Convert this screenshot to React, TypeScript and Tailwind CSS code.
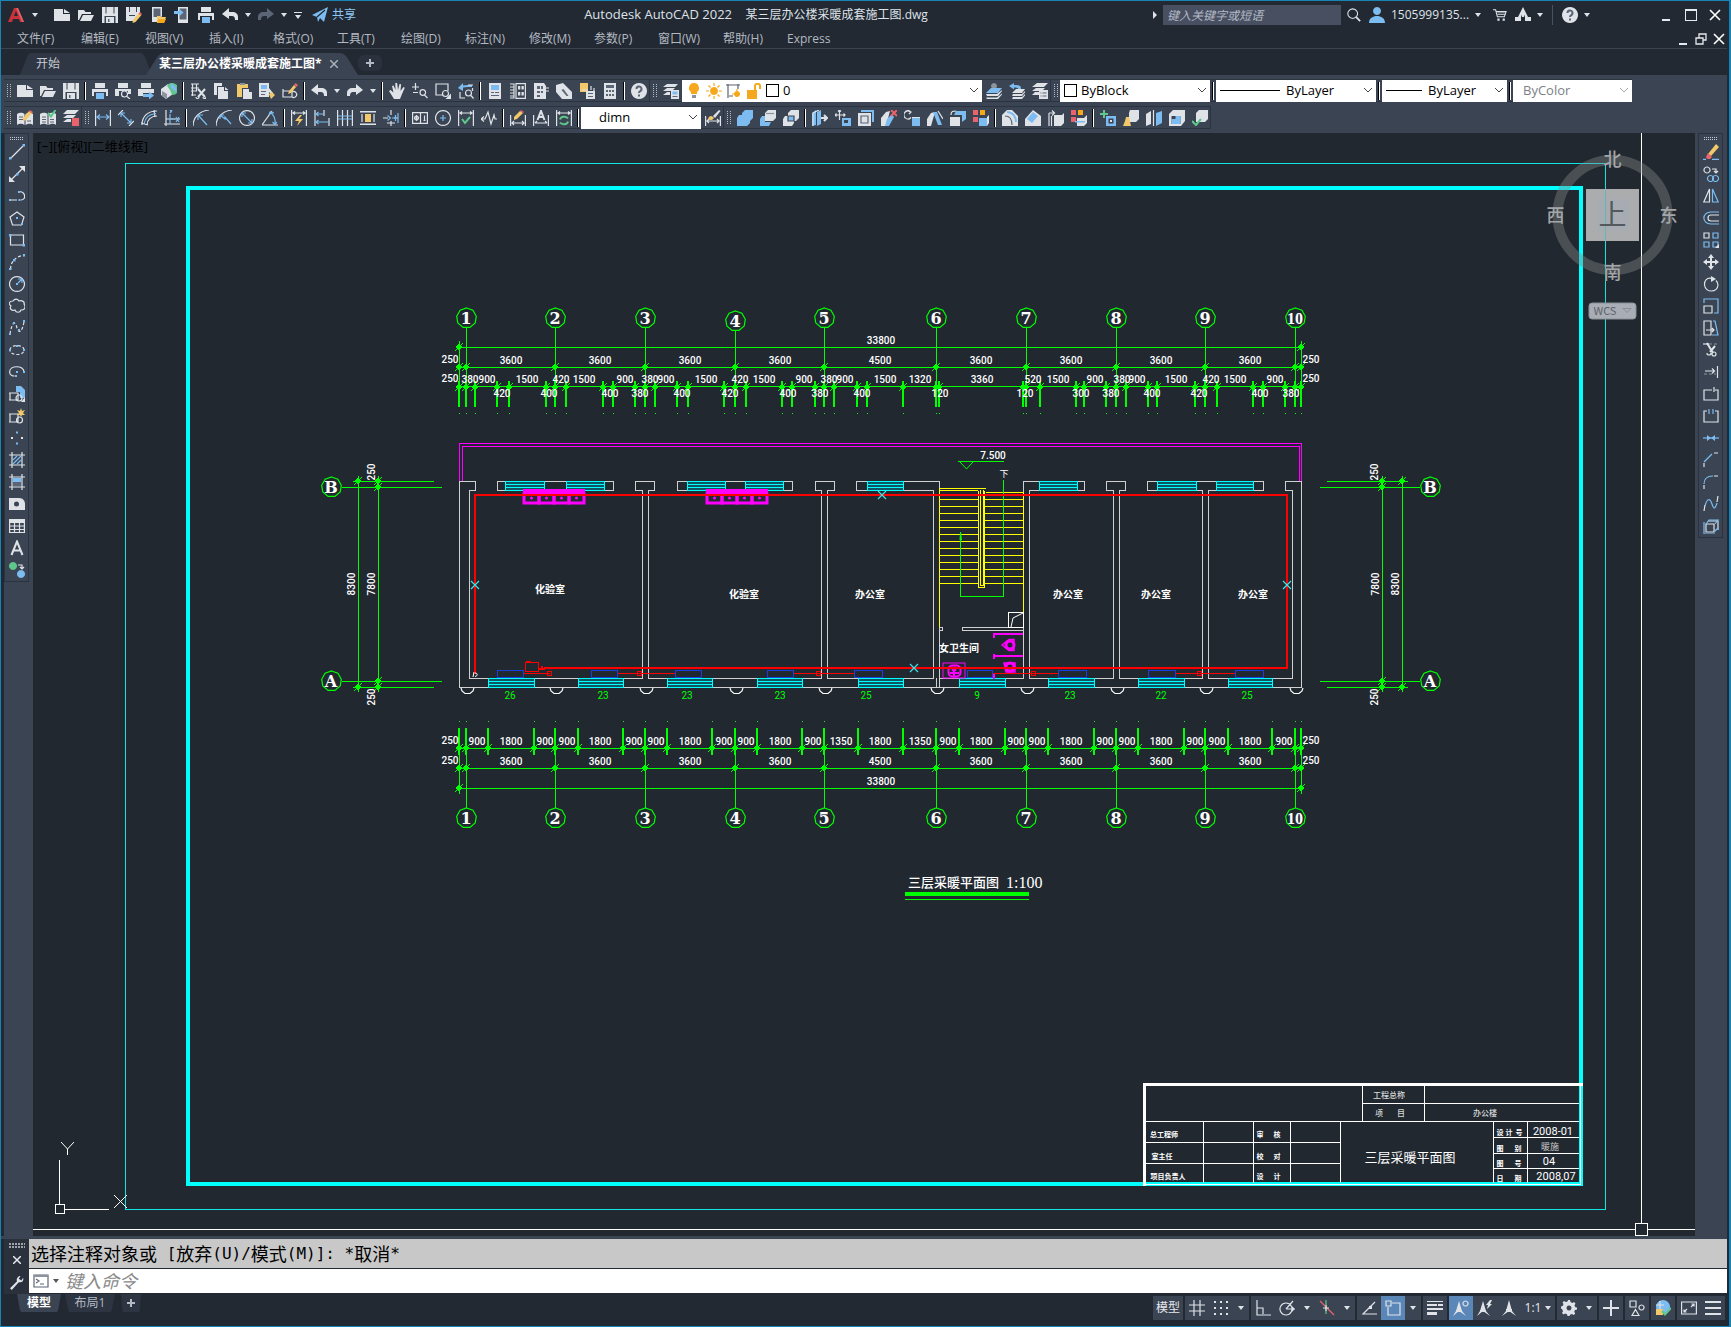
import React from "react";

/* ------------------------------------------------------------------ */
/* Icons: each icon is a list of "<mode><colour>:<path>" parts.         */
/* mode f = fill, s = stroke, t = thick stroke, d = dashed stroke       */
/* ------------------------------------------------------------------ */
const COLORS: Record<string, string> = {
  W: "#dfe3e8",
  B: "#7cbcf0",
  Y: "#f2c96a",
  O: "#f5a81c",
  G: "#5fc78b",
  R: "#e8636b",
  D: "#3b4453",
  K: "#5b6575",
  N: "#20262e",
  X: "#8c939d",
};

const ICONS: Record<string, string> = {
  newFile: "fW:M0 2h9v5h7v7H0z;fW:M10 2l6 4h-6z",
  open: "fW:M0 3h6l1.500 2H13v2H4l-3 6H0z;fW:M5 8h11l-3 6H2z",
  save: "fW:M0 0h16v16H0z;fD:M3.500 0h1v6.500h-1zM11.500 0h1v6.500h-1zM2.500 9h11v7h-11z;fW:M4 10h8v6H4z;fK:M6 12h1.500v3H6z",
  saveAs: "fW:M0 0h14v7l-6 7H0z;fD:M3 0h1v5H3zM10 0h1v5h-1zM3 8h6v1H3z;fY:M7 13l6-7 2.500 2-6 7-3 1z;fR:M12.500 6.500l1.500-1.500 2 2-1.500 1.500z",
  webOpen: "fW:M2 0h10v9l-3 6H2z;fK:M3.500 1.500h7V10h-7z;fY:M7 9h3l1 1h5l-2 6H7z;fO:M8.500 12H16l-2 4H7z",
  webSave: "fW:M4 0h10v16H4z;fK:M5.500 1.500h7v11h-7z;fB:M0 4h5V1.500l4.500 4L5 9.500V7H0z",
  print: "fW:M3 0h10v5H3zM0 6h16v7h-2V9H2v4H0z;fB:M4 10h8v6H4z",
  preview: "fW:M3 0h10v5H3zM0 6h16v5h-3V8H4v5H0z;sW:M6.500 11a3 3 0 1 0 6 0a3 3 0 1 0-6 0M12 13.500l3 2.500",
  publish: "fW:M3 0h10v5H3zM0 6h16v4H5v3H0z;fB:M5 11h6V8.500l5 4-5 4V14H5z",
  globe: "fW:M0 6l7-5 5 3v7l-7 5-5-4z;fG:M6 3a6 6 0 1 1 5 9l-2-5z;fB:M9 1a6 6 0 0 1 6 8l-5-4z;fX:M1 8l5 3v5l-5-3z",
  cut: "sW:M1 1h8M1 5h8M1 8h6M1 12h5M2.500 1v12M6.500 1v7;tW:M8 6l7 8M15 6l-7 8;sW:M6 14a1.500 1.500 0 1 0 3 0M13 14a1.500 1.500 0 1 0 3 0",
  copy: "fW:M1 0h8v3H4v9H1z;fW:M5 4h6v4h4v8H5z;fW:M12 4l3.500 3H12z",
  paste: "fY:M1 1h11v4H6v9H1z;fX:M4 0h5v2H4z;fW:M7 6h6v3h3v7H7z",
  matchProps: "fW:M0 0h10v14H0z;fB:M2 2h6v4H2z;fK:M2 8h5v1H2zM2 11h4v1H2z;fW:M8 7l2-2 4 5-2 1z;fY:M10 11l3-2 3 3-4 4z",
  blockEdit: "sW:M1 8h9v6H1zM1 6v2M10 14a3 3 0 1 0 0-5;fY:M7 8l5-6 2 2-5 6-3 1z;fR:M12 2l1.500-2 2.500 2-1.500 2z",
  undo: "fW:M0 7l7-6v4h3c4 0 6 2 6 5v3h-3c0-3-1-4-3-4H7v3z",
  redo: "fW:M16 7L9 1v4H6c-4 0-6 2-6 5v3h3c0-3 1-4 3-4h3v3z",
  redoDim: "fK:M16 7L9 1v4H6c-4 0-6 2-6 5v3h3c0-3 1-4 3-4h3v3z",
  pan: "fW:M5 16L0 8l1.500-1L4.500 9.500 3 3l1.500-.5L6.500 7 6.300 0h1.800L9 7l1.500-6 1.600.3L11.500 8 14.500 4l1.300.8L13 11l-2 5z",
  zoomRt: "sW:M0 4h7M3.500 0v7M1 9.500h5;sW:M8 9.500a2.800 2.800 0 1 0 5.600 0a2.800 2.800 0 1 0-5.600 0M12.500 12l3 3",
  zoomWin: "sW:M8 12H1V1h12v7;sW:M7.500 10.500a3 3 0 1 0 6 0a3 3 0 1 0-6 0;fW:M16 10.500v5.500h-5.500z",
  zoomPrev: "tB:M2 5c3-3 7-2 12-2;fB:M0 5l5-5v8z;sW:M2 9v6h5M14.500 5v3M10 2h5;sW:M7.500 10a3 3 0 1 0 6 0a3 3 0 1 0-6 0M12.500 12l3 3.500",
  props: "fW:M2 0h12v16H2z;fB:M4 2h8v5H4z;fK:M4 9h3v1H4zM8 9h4v1H8zM4 12h8v1H4z",
  designCenter: "sW:M0 1h4v14H0M0 4h4M0 7h4M0 10h4M0 13h4M6 .600h9.400v14.800H6z;fW:M8 3h2.300v3.500H8zM11.500 3h2.300v3.500h-2.300zM8 9h2.300v3.500H8zM11.500 9h2.300v3.500h-2.300z",
  toolPal: "fW:M1 0h10l2 3v13H1z;fK:M4 3h3v3H4zM8 3h2v3H8zM4 8h3v2H4zM8 8h2v2H8zM4 12h3v2H4z;sW:M13 5h3M13 8h3",
  sheetSet: "fW:M0 2l7-2 9 9v7H6L0 9z;fK:M5.500 7l2-1 5 7h-2z",
  markup: "fY:M1 0h8v9H1z;sW:M3 7h6M12 3v4M15 5v3;fW:M7 8h9v8H7z;fK:M9 10h5v1H9zM9 13h5v1H9z",
  calc: "fW:M2 0h12v16H2z;fK:M4 2h8v3H4zM4 7h2v2H4zM7 7h2v2H7zM10 7h2v2h-2zM4 11h2v2H4zM7 11h2v2H7zM10 11h2v2h-2z",
  help: "fW:M8 0a8 8 0 1 0 .01 0z;tK:M5.500 6a2.500 2.500 0 1 1 3.500 2.300c-1 .5-1 1-1 1.700;fK:M7 11.500h2v2H7z",
  layerProps: "fW:M4 1h11l-3 3H0zM4 5h8l-3 3H0zM4 9h3v3H0z;fW:M8 7h8v9H8z;fB:M9.500 8.500h5v3h-5z;fK:M9.500 13h5v1h-5z",
  layerCurrent: "fX:M8 0a3 3 0 1 0 .01 0z;fB:M5 5h11l-4 5H0z;fW:M0 11h11l5-4v1l-4 5H1zM0 14.500h11l5-4v1L12 16H1z",
  layerPrev: "fB:M0 3l5-3v2c6 0 7 1 7 4H9c0-1.500-2-1.500-4-1.500v2z;fW:M7 6h9l-3 4H3zM4 11h9l3-3v1.500l-3 3.500H3zM4 14h9l3-3v1.500l-3 3.500H3z",
  layerState: "fW:M5 0h11l-4 4H0zM4 5h9l-3 3H0zM3 9h4v3H0z;fW:M7 7h9v9H7z;fK:M8.500 9.500h1v1h-1zM10.500 9.500h4v1h-4zM8.500 12.500h1v1h-1zM10.500 12.500h4v1h-4z",
  refEdit: "fW:M0 4c3-2 6-1 7.500 0v11c-2-1-4-2-7.500 0zM8.500 4c2-1 5-2 7.500 0v11c-3-2-5-1-7.500 0z;sK:M2 7h4M2 9.500h4M10 11h4;fY:M6 8l6-7 3 2-6 7-3 1z;fR:M12 1.500L13 0l3 2-1 1.500z",
  refSave: "fW:M0 4c3-2 6-1 7.500 0v11c-2-1-4-2-7.500 0zM8.500 4c2-1 5-2 7.500 0v11c-3-2-5-1-7.500 0z;sK:M2 7h4M2 9.500h4M2 12h4M10 9.500h4M10 12h4;tG:M8 3l3 3.500L15.500 0",
  refRemove: "fW:M4 0h12l-4 4H0zM4 5h9l-3 3H0zM4 9h4v3H0z;fR:M9 8h7v8H9z",
  dimLinear: "sW:M.6 0v16M15.400 0v16;sB:M2 7h12M5 4.500L2 7l3 2.500M11 4.500L14 7l-3 2.500",
  dimAligned: "sW:M0 5l5-5M11 16l5-5;sB:M3 3l10 10M3 3v4M3 3h4M13 13v-4M13 13H9",
  dimArc: "sW:M1 15C1 6 7 1 16 1M6 15c0-5 4-9 10-9M0 13l7 2M13 0l1 7;sB:M3 14C4 8 8 4 15 3.500",
  dimOrd: "sW:M2 0v16M0 14h16M2 9h14;sB:M6 4v10M6 9h5M12 7l3 5M15 7l-3 5M6 0l2 2M8 0L6 3",
  dimRadius: "sW:M16 0C7 1 0 7 0 16;sB:M5 5l9 10M5 5v5M5 5h5",
  dimJog: "sW:M16 0C7 1 0 7 0 16;sB:M4 5l5 4V7l6 7M4 5h4M4 5v4",
  dimDia: "sW:M8 .6a7.400 7.400 0 1 0 .01 0z;sB:M3 3l10 10M3 7V3h4M9 13h4V9",
  dimAngle: "sW:M0 15h16M0 15L10 1;sB:M8 2c4 3 6 7 5 13M7 5l1-3 4 1M10.500 12l2.500 2.500 2-2.500",
  dimQuick: "sW:M.6 0v16M15.400 0v16M2 3h12M4 1.500L2 3l2 1.500M12 1.500L14 3l-2 1.500;fY:M9 5l-5 6h4l-2 5 6-7H8l3-4z",
  dimBase: "sW:M1 0v16M10 0v6M15 8v8;sB:M2 4h8M2 12h13M4.500 2L2 4l2.500 2M4.500 10L2 12l2.500 2",
  dimCont: "sW:M.6 0v16M5.500 0v16M10.500 0v16M15.400 0v16;sB:M1 6h14M1 9h14",
  dimSpace: "fW:M0 1h16v1.500H0zM0 13.500h16V15H0z;fY:M5 4h6v8H5z;sW:M2 4v8M14 4v8",
  dimBreak: "sW:M0 8h5M11 8h4M8 0v5M8 11v5M4 13h8;sB:M4.500 5.500l3 2.500-3 2.500M12.500 5v6M15 3v10M9 8h3",
  tolerance: "sW:M.6 2.600h14.800v10.800H.6zM8.500 2.600v10.800M4.500 5v6M2 8h5M12.500 5.500v5M11.500 10.500h2M4.500 6a2 2 0 1 0 .01 0z",
  center: "sW:M8 .6a7.400 7.400 0 1 0 .01 0z;sB:M8 5v6M5 8h6",
  inspect: "sW:M.6 0v16M15.400 0v16M2 3h12M4 1.500L2 3l2 1.500M12 1.500L14 3l-2 1.500;tG:M4 9l3 4 5-6",
  jogLine: "sW:M0 9h4l3-7 3 12 3-9 1 4h2M0 9l3-2.500M0 9l3 2.500",
  dimEdit: "sW:M.6 5v11M15.400 5v11M2 13h12M4 11l-2 2 2 2M12 11l2 2-2 2;fY:M4 7l6-6 3 2-6 6-3 1z;fR:M10 1l1-1 3 2-1 1z",
  dimText: "sW:M.6 5v11M15.400 5v11M2 13h12M4 11l-2 2M12 11l2 2;tW:M4.500 10L8 1l3.500 9M6 7h4",
  dimUpdate: "sW:M.6 0v16M15.400 0v16M2 3h12M4 1.500L2 3l2 1.500M12 1.500L14 3l-2 1.500;tG:M4 9.500c1-3.500 6-3.500 8-1M12 11.500c-1 3.500-6 3.500-8 1",
  dimStyle: "sW:M.6 6v10M15.400 6v10M2 11h12M4 9l-2 2 2 2M12 9l2 2-2 2;fY:M3 9c1-3 3-4 5-2l1 1c-1 2-4 3-6 1z;fW:M8 6l6-6 1.500 1L10 8z",
  union: "fB:M8 0h8v8l-3 3v2l-3 3H0V8l2-3h3V3z",
  subtract: "fW:M8 0h8v8l-3 3H5V3z;fB:M0 9l2-3h3v6h6l-2 4H0z;sX:M6 3.500h8",
  intersect: "fW:M8 0h8v8l-3 3H5V3z;fW:M0 9l2-3h4v4h5v3l-2 3H0z;fB:M5 6h6v5H5z;sD:M5 6h6v5H5z",
  extrude: "fB:M0 3l4-3v15l-4 1zM5 2l4-2v14l-4 2z;sW:M1 16V3l6-3;tW:M9 8h5M12 5l3 3-3 3",
  moveFace: "sW:M4.500 0v10M0 5h10M3 1.500L4.500 0 6 1.500M1.500 3.500L0 5l1.500 1.500M8.500 3.500L10 5 8.500 6.500;fB:M7 8h9v8H7z;fD:M9 10h4v3H9z",
  offsetFace: "fB:M3 0h13v12h-2V2H3z;fW:M0 3h13v13H0z;sK:M3 6h7v7H3z",
  deleteFace: "fW:M0 8l5-6 4-1-4 15H0z;fB:M6 9l5-5 2 3-5 9H4z;tR:M10 0l6 6M16 0l-6 6",
  rotateFace: "sW:M6 1.500a4 4 0 1 0 1 6M4 0l3 2-2 2;fB:M8 7h8v9H8z;fW:M8 7h8v1H8z",
  taperFace: "fW:M0 9l4-6 4-1-4 14H0z;fB:M6 2h4l5 13h-4z;sW:M11 1l5 8",
  copyFace: "fW:M0 7h10v9H0z;fB:M6 1h10v8l-4 3V5H4z;sW:M1 5c0-4 2-4 5-4",
  colorFace: "fR:M0 0h5v5H0zM0 7h5v5H0z;fO:M7 0h5v5H7z;fB:M6 8h8v8H6z;fW:M14 7l2-2v8l-2 3z",
  copyEdge: "fW:M0 5l5-5h5l6 6v10H0z;tB:M5 2c6 0 9 5 9 10;sK:M3 6c5 0 7 4 7 9",
  colorEdge: "fW:M0 9l8-9 8 6v10H0z;fB:M2 9l6-7 5 4-6 7z",
  imprint: "sW:M1 3v13M1 3h5M4 .500L6.500 3 4 5.500M3.500 16V6;fW:M6 5h8l2-2v10l-3 3H6z",
  imprint2: "fR:M0 0h5v5H0zM0 7h5v5H0z;fO:M7 0h5v5H7z;fW:M6 8h7l3-3v8l-3 3H6z;fB:M4 11h10v1.500H4z",
  clean: "tG:M4 0v8M0 4h8;fB:M6 6h10v10H6z;fD:M8.500 8.500h5v5h-5z;fW:M10 10h2v2h-2z",
  separate: "fW:M7 0h9v9l-3 3H6V3z;fY:M3 7h3l2 9H0l2-5z",
  shell: "fW:M0 4l5-3v13l-5 2z;fB:M10 3l6-2v12l-6 3z;sW:M7.500 0v16",
  check: "fW:M0 4l4-4h12v11l-4 5H0z;fD:M2.500 6h9v8h-9z;fB:M2.500 9h4V6h5v8h-9z",
  solidCheck: "fW:M4 3l3-3h9v9l-3 3H4z;tG:M0 11l4 4L9 9",
  line: "sW:M2 14L14 2;fB:M0 13h2.500v2.500H0zM13.500 0H16v2.500h-2.500z",
  xline: "sW:M2 14L14 2;fW:M0 16v-6l6 6zM16 0v6l-6-6z;fB:M7 7h2.500v2.500H7z",
  pline: "sW:M2 12h6M10 4c6-2 8 8 2 8;fB:M0 11h2v2H0zM9 3h2v2H9zM9.500 11h2v2h-2z",
  polygon: "sW:M8 2l7 5-2.500 8h-9L1 7z;fB:M7 7h2v2H7zM12 13h2v2h-2z",
  rect: "sW:M1.500 3h13v10h-13z;fB:M0 2h2.500v2.500H0zM13.500 12H16v2.500h-2.500z",
  arc: "dW:M1.500 15C2 7 7 2 15 1.500;fB:M0 14h2.500v2H0zM4 5h2.500v2.500H4zM14 0h2v2.500h-2z",
  circle: "sW:M8 .6a7.400 7.400 0 1 0 .01 0z;sB:M9 7l4-4M9 3h4v4;fB:M7 7h2v2H7z",
  cloud: "sW:M4 3c2-3 5-2 6 0 3-1 6 1 5 3 2 3 1 6-3 6-1 3-5 3-6 0-3 1-6-1-4-4-3-2-2-5 2-5z",
  spline: "dW:M1 14C3 2 6 0 8 8c2 6 5 4 7-6;fB:M0 13h2v2H0zM4 2h2v2H4zM9 9h2v2H9zM14 0h2v2h-2z",
  ellipse: "dW:M1 8c0-6 14-6 14 0s-14 6-14 0z;fB:M0 7h2v2H0zM14 7h2v2h-2zM7 3h2v2H7z",
  ellipseArc: "sW:M15 8C15 1 .6 1 .6 8c0 3 3 4 5 4;fB:M14 7h2v2h-2zM7 7h2v2H7zM6 11h2v2H6z",
  insert: "sW:M1 7h8v7H1zM0 14h2M0 7h2;fB:M7 0h5l4 4v8H11V6H7z;sW:M7 12a3 3 0 1 0 6 0a3 3 0 1 0-6 0;fW:M16 11v5h-4z",
  block: "sW:M1 6h8v8H1zM0 14h2M0 6h2M7.500 12a3 3 0 1 0 6 0a3 3 0 1 0-6 0;fY:M12 0l1 3 3-1-2 3 2 2-3 0-1 2-1-2-3 0 2-2-2-3 3 1z",
  point: "fB:M7 1.500h2v2H7zM7 12.500h2v2H7z;fW:M2 7h2v2H2zM12 7h2v2h-2z",
  hatch: "sW:M3 0v16M13 0v16M0 3h16M0 13h16;sB:M4 8l4-4M4 12l8-8M8 12l4-4",
  gradient: "sW:M3 0v16M13 0v16M0 3h16M0 13h16;fB:M4 4h8v4H4z;fK:M4 8h8v4H4z",
  region: "fW:M0 2h10c4 0 6 3 6 6v6H0z;fD:M5 8a2.500 2.500 0 1 0 5 0a2.500 2.500 0 1 0-5 0z",
  table: "fW:M0 1h16v4H0z;sW:M.6 2h14.800v12.500H.6zM0 8h16M0 11.500h16M5.500 5v10M10.500 5v10",
  mtext: "tW:M2.500 15L8 1.500 13.500 15M4.500 10.500h7",
  addSel: "fG:M4 0a4 4 0 1 0 .01 0z;fB:M12 8a4 4 0 1 0 .01 0z;sW:M9 3h4v4M11 5l2 2 2-2",
  erase: "fY:M5 10L13 0l3 3-8 9z;fR:M5 9l4 4-2 2H4l-1-2z;sB:M0 15.400h3M9 15.400h7",
  copyObj: "sW:M4 1a3 3 0 1 0 .01 0zM9 3h4v4M11 5l2 2 2-2;sB:M7.500 9.500a3 3 0 1 0 .01 0zM12.500 9.500a3 3 0 1 0 .01 0z",
  mirror: "sW:M6.500 1v13H.8z;sB:M9.500 1v13h5.700z",
  offset: "sW:M16 5H8c-4 0-4 6 0 6h8;sB:M16 2H8C-1.500 2-1.500 14 8 14h8",
  array: "sW:M1 1h5v5H1z;sB:M10 1h5v5h-5zM1 10h5v5H1zM10 10h5v5h-5z;fW:M16 12v4h-4z",
  move: "tW:M8 2v12M2 8h12;fW:M8 0l3 4H5zM8 16l3-4H5zM0 8l4-3v6zM16 8l-4-3v6z",
  rotate: "sW:M9 2.500C4 1 1 5 1.500 9c1 8 13 8 13.500 0 0-2-.5-3-2-4.500;fW:M8 0l5 3-5 3z",
  scale: "sW:M1 8h8v7H1z;sB:M1 5V1h14v14h-4",
  stretch: "sW:M1 1h7v14H1zM3 10h8M9 8l2 2-2 2;sB:M10 1h2l3 14h-6",
  trim: "sW:M0 2h6;dX:M6 2h10;tW:M4 1l6 10M12 4l-5 6;sW:M9 12a2 2 0 1 0 4 0a2 2 0 1 0-4 0M4 11a2 2 0 1 0 4 0",
  extend: "sW:M14.500 2v12M2 7h9M9 4.500L11.500 7 9 9.500;dX:M1 10h12",
  breakPt: "sW:M9 4H1v10h14V4h-3M11 1v5",
  breakAt: "sW:M4 3H1v11h14V3h-3;sB:M6 1v5M10 1v5",
  join: "sB:M0 8h16;fB:M4 5l4 3-4 3zM12 5L8 8l4 3z",
  chamfer: "sW:M1 15v-4M11 1h4;sB:M1 10l8-8",
  fillet: "sW:M1 15v-4M11 2h4;sB:M1 10c0-5 3-8 9-8",
  blend: "sW:M15 0l-1 6M1 15l1-6;sB:M2 10c2-8 5-8 7-2s3 5 5-1",
  explode: "sW:M3 6h8v8H3zM5 3h10v9;sB:M1 4v12h11M3 6l3-4h9l-3 4M11 14l4-4",
  cart: "sW:M0 2h3l2 8h8l2-6H4;fW:M5 5h9v1H5zM5 7h9v1H5zM5 12h2.500v2.500H5zM11 12h2.500v2.500H11z",
  appStore: "fW:M8 0l5 10h-3L8 5l-2 5H3z;fW:M0 10h6v4H0zM10 10h6v4h-6zM7 5h2v5H7z",
  plane: "fB:M0 8L16 0 12 15 8 11l-2 4-1-5z;sN:M5 10l8-7",
  user: "fB:M8 0a4 4 0 1 0 .01 0zM0 16c0-5 4-7 8-7s8 2 8 7z",
  search: "sW:M6.500 1a5.500 5.500 0 1 0 .01 0z;tW:M10.500 10.500L15 15",
  bulb: "fO:M8 0a5 5 0 0 0-3 9v2h6V9a5 5 0 0 0-3-9z;fX:M6 12h4v3H6z",
  sun: "fO:M8 4a4 4 0 1 0 .01 0z;sO:M8 0v3M8 13v3M0 8h3M13 8h3M2.500 2.500l2 2M11.500 11.500l2 2M2.500 13.500l2-2M11.500 4.500l2-2",
  vpFreeze: "sK:M2 13V3M0 2h14M3 13h4M12 1v5M2 1v14;fO:M11 8a3 3 0 1 0 .01 0z;dO:M11 6v10M6 11h10",
  unlock: "fO:M1 7h10v9H1z;tO:M9 7V3c0-3 5-3 5 0v3",
  stGrid: "sW:M5 0v16M11 0v16M0 5h16M0 11h16",
  stSnap: "fW:M1 1h2v2H1zM7 1h2v2H7zM13 1h2v2h-2zM1 7h2v2H1zM7 7h2v2H7zM13 7h2v2h-2zM1 13h2v2H1zM7 13h2v2H7zM13 13h2v2h-2z",
  stOrtho: "sW:M2 0v15h14M2 8h6v6",
  stPolar: "sW:M7 3a6 6 0 1 0 .01 0zM7 9l7-8M7 9h9M12 6l3 3-3 3",
  stIso: "sG:M7 0v14;sR:M1 1l14 14;sW:M4 8h6M7 5v6",
  stTrack: "sW:M14 2L2 14h14;fW:M8 6h3v3H8z",
  stOsnap: "sW:M7 3h8v12H3V7M1 1h5v5H1z",
  stLw: "fW:M0 1h16v1H0zM0 4h10v2H0zM11 4h5v2h-5zM0 8h16v2H0zM0 12h10v3H0z",
  stAnno1: "fW:M6 1l3 10 4 5-7-5-6 5 3-5z;fW:M3 10h6v2H3z;sW:M12.500 1a2.500 2.500 0 1 0 .01 0z",
  stAnno2: "fW:M6 1l3 10 4 5-7-5-6 5 3-5z;fW:M3 10h6v2H3z;fW:M13 0L9 5h2l-1 4 5-5h-2l2-4z",
  stAnno3: "fW:M8 0l3 11 4 5-7-5-7 5 4-5z;fW:M5 9h6v3H5z",
  gear: "fW:M7 0h2l.5 2 2 1L13 2l1.500 1.500-1 1.700.8 2L16 7.500v2l-2 .5-.8 1.800 1 1.700-1.500 1.500-1.700-1-2 .8L8.500 16h-2L6 14.300l-2-.8-1.500 1L1 13l1-1.700-.8-2L0 8.500v-2l1.700-.5.8-2-1-1.500L3 1l1.700 1 1.800-.5z;fD:M8 5.500a2.500 2.500 0 1 0 .01 0z",
  plus: "tW:M8 0v16M0 8h16",
  shapes: "sW:M1 1h6v6H1zM12.500 5a2.500 2.500 0 1 0 .01 0zM6.500 9.500l3.500 6H3z",
  perf: "fB:M8 0a7 7 0 1 0 .01 0z;fY:M1 9h7v6H1z;sW:M1 5h8M5 1v8;tG:M7 11l3 3.500L16 8",
  clean2: "sW:M.6 2h14.800v12H.6zM3 12l3-3M3 9.500V12h2.500M13 4l-3 3M10.500 4H13v2.500",
  menu: "fW:M0 1h16v2H0zM0 7h16v2H0zM0 13h16v2H0z",
  cmd: "sK:M1 2h14v12H1zM3 6l3 2-3 2M7 11h4;fX:M1 2h14v2H1z",
  wrench: "fW:M0 14l8-8c-1-3 1-6 4-6l-2 3 3 2 2-3c1 4-2 6-5 5l-8 9z",
};

function Icon({ name, className = "size-4" }: { name: string; className?: string }) {
  return (
    <svg viewBox="0 0 16 16" className={className} aria-hidden="true" fill="none">
      {ICONS[name].split(";").map((part, i) => {
        const mode = part[0];
        const color = COLORS[part[1]];
        const d = part.slice(3);
        return mode === "f" ? (
          <path key={i} d={d} fill={color} fillRule="evenodd" />
        ) : (
          <path
            key={i}
            d={d}
            stroke={color}
            strokeWidth={mode === "t" ? 2 : 1.2}
            strokeDasharray={mode === "d" ? "3 2" : undefined}
          />
        );
      })}
    </svg>
  );
}

function Caret({ className = "text-[#dfe3e8]" }: { className?: string }) {
  return (
    <svg viewBox="0 0 6 4" className={`h-1 w-1.5 ${className}`} fill="currentColor" aria-hidden="true">
      <path d="M0 0h6L3 4z" />
    </svg>
  );
}

const CaretButton = ({ label, w = "w-3" }: { label: string; w?: string }) => (
  <button type="button" aria-label={label} className={`flex h-full shrink-0 items-center justify-center ${w}`}>
    <Caret />
  </button>
);

/* ------------------------------------------------------------------ */
/* Top chrome                                                          */
/* ------------------------------------------------------------------ */
const QAT: [string, string][] = [
  ["newFile", "新建"],
  ["open", "打开"],
  ["save", "保存"],
  ["saveAs", "另存为"],
  ["webOpen", "从 Web 打开"],
  ["webSave", "保存到 Web"],
  ["print", "打印"],
  ["undo", "放弃"],
];

function TitleBar() {
  return (
    <header className="flex h-7 items-center text-xs text-[#dfe3e8]">
      <div className="flex w-[358px] shrink-0 items-center">
        <button type="button" aria-label="应用程序菜单" className="ml-[7px] flex shrink-0 items-center gap-2">
          <svg viewBox="0 0 16 16" className="size-4" aria-hidden="true">
            <path d="M0 15L6 1h4l6 14h-4l-1-3H5l-1 3zM6 9h4L8 4z" fill="#c8323a" fillRule="evenodd" />
            <path d="M8 1h2l6 14h-2z" fill="#e0606a" />
          </svg>
          <Caret />
        </button>
        <div className="ml-3 flex shrink-0 items-center">
          {QAT.map(([icon, label]) => (
            <button key={icon} type="button" aria-label={label} className="flex w-6 justify-center">
              <Icon name={icon} />
            </button>
          ))}
          <CaretButton label="放弃列表" />
          <button type="button" aria-label="重做" className="flex w-6 justify-center">
            <Icon name="redoDim" />
          </button>
          <CaretButton label="重做列表" />
          <button type="button" aria-label="自定义快速访问工具栏" className="flex w-4 flex-col items-center gap-0.5">
            <span className="h-px w-2 bg-[#dfe3e8]" />
            <Caret />
          </button>
          <button type="button" className="ml-1.5 flex items-center gap-1 whitespace-nowrap text-[#8cc8f5]">
            <Icon name="plane" />
            共享
          </button>
        </div>
      </div>
      <h1 className="min-w-0 flex-1 truncate text-center text-[13px] whitespace-pre">
        Autodesk AutoCAD 2022{"    "}
        <span className="text-xs">某三层办公楼采暖成套施工图.dwg</span>
      </h1>
      <div className="flex w-[574px] shrink-0 items-center">
        <svg viewBox="0 0 4 8" className="mr-1.5 h-2 w-1" aria-hidden="true">
          <path d="M0 0l4 4-4 4z" fill="#dfe3e8" />
        </svg>
        <input
          aria-label="搜索"
          placeholder="键入关键字或短语"
          className="h-5 w-[178px] bg-[#474f61] px-1 text-xs italic outline-none placeholder:text-[#b4bac5]"
        />
        <button type="button" aria-label="搜索" className="ml-1.5">
          <Icon name="search" className="size-3.5" />
        </button>
        <button type="button" className="ml-2 flex items-center gap-1.5">
          <Icon name="user" className="size-4" />
          <span>1505999135...</span>
          <Caret />
        </button>
        <button type="button" aria-label="购物车" className="ml-3">
          <Icon name="cart" className="size-3.5" />
        </button>
        <button type="button" aria-label="应用商店" className="ml-2 flex items-center gap-1.5">
          <Icon name="appStore" />
          <Caret />
        </button>
        <span className="mx-[9px] h-5 w-px bg-[#4a5262]" />
        <button type="button" aria-label="帮助" className="flex items-center gap-1.5">
          <Icon name="help" />
          <Caret />
        </button>
        <div className="ml-auto flex items-center gap-3 pr-1.5">
          <button type="button" aria-label="最小化" className="flex size-3.5 items-end justify-center pb-px">
            <span className="h-0.5 w-2 bg-[#e6e9ed]" />
          </button>
          <button type="button" aria-label="最大化" className="size-3 border border-t-2 border-[#e6e9ed]" />
          <button type="button" aria-label="关闭">
            <svg viewBox="0 0 12 12" className="size-3" stroke="#fff" strokeWidth="1.6" aria-hidden="true">
              <path d="M1 1l10 10M11 1L1 11" />
            </svg>
          </button>
        </div>
      </div>
    </header>
  );
}

const MENUS = [
  "文件(F)", "编辑(E)", "视图(V)", "插入(I)", "格式(O)", "工具(T)", "绘图(D)",
  "标注(N)", "修改(M)", "参数(P)", "窗口(W)", "帮助(H)", "Express",
];

function MenuBar() {
  return (
    <nav className="flex h-5 items-center gap-[23px] border-b border-[#3b4350] pl-4 text-xs text-[#b4b9c1]">
      {MENUS.map((m) => (
        <button key={m} type="button" className="min-w-[41px] text-left whitespace-nowrap">
          {m}
        </button>
      ))}
      <div className="ml-auto flex items-center gap-1.5 pr-0.5">
        <button type="button" aria-label="最小化图形" className="flex size-3 items-end justify-center">
          <span className="h-0.5 w-2 bg-[#e6e9ed]" />
        </button>
        <button type="button" aria-label="还原图形">
          <svg viewBox="0 0 12 12" className="size-3" fill="none" stroke="#e6e9ed" strokeWidth="1.3" aria-hidden="true">
            <path d="M1 5h7v6H1zM4 5V1h7v6H8" />
          </svg>
        </button>
        <button type="button" aria-label="关闭图形">
          <svg viewBox="0 0 12 12" className="size-3" stroke="#fff" strokeWidth="1.6" aria-hidden="true">
            <path d="M1 1l10 10M11 1L1 11" />
          </svg>
        </button>
      </div>
    </nav>
  );
}

/* Slanted tab outline, drawn behind the tab's label. */
const TabShape = ({ fill, flip = false }: { fill: string; flip?: boolean }) => (
  <svg viewBox="0 0 100 22" preserveAspectRatio="none" className="absolute inset-0 -z-10 size-full" aria-hidden="true">
    <path d={flip ? "M0 0h100l-6 18q-1 4-4 4H10q-3 0-4-4z" : "M0 22l5-17q1.500-5 4-5h82q2.500 0 4 5l5 17z"} fill={fill} />
  </svg>
);

function FileTabs() {
  return (
    <div className="isolate flex h-[26px] items-end pt-0.5 pl-[19px] text-xs">
      <button type="button" className="relative h-[22px] w-[132px] pl-4 text-left text-[#c6cad1]">
        <TabShape fill="#2f3744" />
        开始
      </button>
      <div className="relative -ml-1.5 flex h-[22px] w-[212px] items-center">
        <TabShape fill="#3b4453" />
        <button type="button" className="pl-[13px] font-bold whitespace-nowrap text-white">
          某三层办公楼采暖成套施工图*
        </button>
        <button type="button" aria-label="关闭选项卡" className="ml-2">
          <svg viewBox="0 0 8 8" className="size-2" stroke="#aab0ba" strokeWidth="1.5" aria-hidden="true">
            <path d="M0 0l8 8M8 0L0 8" />
          </svg>
        </button>
      </div>
      <button
        type="button"
        aria-label="新图形"
        className="mb-1 flex h-4 w-6 items-center justify-center rounded-md bg-[#2b323e]"
      >
        <svg viewBox="0 0 8 8" className="size-2" stroke="#b4bac4" strokeWidth="2" aria-hidden="true">
          <path d="M4 0v8M0 4h8" />
        </svg>
      </button>
    </div>
  );
}

/* ------------------------------------------------------------------ */
/* Toolbars                                                            */
/* ------------------------------------------------------------------ */
const Handle = () => (
  <svg viewBox="0 0 9 16" className="h-4 w-[9px] shrink-0" aria-hidden="true">
    <path d="M3.500 1v14M6.500 1v14" stroke="#b9bec6" strokeWidth="1" strokeDasharray="1 1" />
  </svg>
);

const Sep = () => (
  <span className="flex w-1.5 shrink-0 justify-center">
    <span className="h-[18px] w-0.5 border-l border-black bg-white" />
  </span>
);

function Tools({ names }: { names: string }) {
  return (
    <>
      {names.split(" ").map((n, i) =>
        n === "|" ? (
          <Sep key={i} />
        ) : n === "v" ? (
          <CaretButton key={i} label="更多" w="w-[13px]" />
        ) : (
          <button key={i} type="button" aria-label={n} className="flex h-full w-[23px] shrink-0 items-center justify-center">
            <Icon name={n} />
          </button>
        ),
      )}
    </>
  );
}

const Bar = ({ children }: { children: React.ReactNode }) => (
  <div className="flex h-[23px] shrink-0 items-center shadow-[inset_0_1px_0_#2b3240,inset_0_-1px_0_#2b3240,inset_-1px_0_0_#2b3240]">
    {children}
  </div>
);

function Combo({
  label,
  value,
  width,
  lead,
  muted = false,
}: {
  label: string;
  value: string;
  width: string;
  lead?: React.ReactNode;
  muted?: boolean;
}) {
  return (
    <div className={`flex h-[22px] shrink-0 items-center bg-white text-[13px] ${width}`}>
      {lead}
      <select
        aria-label={label}
        className={`h-full min-w-0 flex-1 appearance-none bg-transparent outline-none ${muted ? "text-[#7b7f86]" : "text-black"}`}
      >
        <option>{value}</option>
      </select>
      <svg viewBox="0 0 8 5" className="mr-1 h-[5px] w-2 shrink-0" fill="none" aria-hidden="true">
        <path d="M0 0l4 4 4-4" stroke={muted ? "#aaa" : "#444"} />
      </svg>
    </div>
  );
}

const Swatch = () => <span className="mx-1 size-[13px] shrink-0 border border-black bg-white" />;

function Toolbars() {
  return (
    <div className="flex flex-col gap-1 bg-[#3b4453] py-1 pl-[3px]">
      <div className="flex">
        <Bar>
          <Handle />
          <Tools names="newFile open save | print preview publish globe | cut copy paste matchProps blockEdit | undo v redo v | pan zoomRt zoomWin zoomPrev | props designCenter toolPal sheetSet markup calc | help" />
        </Bar>
        <Bar>
          <Handle />
          <Tools names="layerProps" />
          <Combo
            label="图层"
            value="0"
            width="w-[300px]"
            lead={
              <span className="flex shrink-0 items-center gap-1 pl-1">
                <Icon name="bulb" />
                <Icon name="sun" />
                <Icon name="vpFreeze" />
                <Icon name="unlock" />
                <span className="mr-1 size-[13px] border border-black bg-white" />
              </span>
            }
          />
          <Tools names="layerCurrent layerPrev layerState" />
        </Bar>
        <Bar>
          <Handle />
          <Combo label="颜色" value="ByBlock" width="w-[150px]" lead={<Swatch />} />
          <Sep />
          <Combo
            label="线型"
            value="ByLayer"
            width="w-[160px]"
            lead={<span className="mr-1.5 ml-1 h-px w-[60px] shrink-0 bg-black" />}
          />
          <Sep />
          <Combo
            label="线宽"
            value="ByLayer"
            width="w-[125px]"
            lead={<span className="mr-1.5 ml-1 h-px w-9 shrink-0 bg-black" />}
          />
          <Sep />
          <Combo label="打印样式" value="ByColor" width="w-[119px]" muted lead={<span className="w-2.5" />} />
        </Bar>
      </div>
      <div className="flex">
        <Bar>
          <Handle />
          <Tools names="refEdit refSave refRemove" />
        </Bar>
        <Bar>
          <Handle />
          <Tools names="dimLinear dimAligned dimArc dimOrd | dimRadius dimJog dimDia dimAngle | dimQuick dimBase dimCont dimSpace dimBreak | tolerance center inspect jogLine | dimEdit dimText dimUpdate |" />
          <Combo label="标注样式" value="dimn" width="w-[120px]" lead={<span className="w-[18px]" />} />
          <Tools names="dimStyle" />
        </Bar>
        <Bar>
          <Handle />
          <Tools names="union subtract intersect | extrude moveFace offsetFace deleteFace rotateFace taperFace copyFace colorFace | copyEdge colorEdge imprint imprint2 | clean separate shell check solidCheck" />
        </Bar>
      </div>
    </div>
  );
}

const DRAW = "line xline pline polygon rect arc circle cloud spline ellipse ellipseArc insert block point hatch gradient region table mtext addSel".split(" ");
const MODIFY = "erase copyObj mirror offset array move rotate scale stretch trim extend breakPt breakAt join chamfer fillet blend explode".split(" ");

function SideBar({ names, label }: { names: string[]; label: string }) {
  return (
    <div
      role="toolbar"
      aria-label={label}
      className="flex w-[25px] shrink-0 flex-col items-center self-start border border-[#2b3240] pt-0.5"
    >
      <svg viewBox="0 0 14 5" className="h-[5px] w-3.5" aria-hidden="true">
        <path d="M0 1.500h14M0 3.500h14" stroke="#c3c8cf" strokeDasharray="1 1" />
      </svg>
      {names.map((n) => (
        <button key={n} type="button" aria-label={n} className="flex h-[22px] w-full items-center justify-center">
          <Icon name={n} />
        </button>
      ))}
    </div>
  );
}

/* ------------------------------------------------------------------ */
/* Drawing                                                             */
/* ------------------------------------------------------------------ */
const GREEN = "#00ff00";
const CYAN = "#00ffff";
const WALL = "#d0d0d0";
const MAGENTA = "#ff00ff";
const YELLOW = "#ffff00";
const RED = "#ff0000";

const AXES = [466, 555, 645, 735, 824, 936, 1026, 1116, 1205, 1295];
const LEFT = 459;
const RIGHT = 1301;

const UPPER_TICKS = [
  459, 466, 475, 497, 509, 546, 555, 566, 603, 613, 635, 645, 655, 677, 688, 724, 735, 746, 782, 792, 815, 824, 834,
  857, 867, 903, 936, 939, 1023, 1026, 1040, 1076, 1084, 1106, 1116, 1126, 1148, 1157, 1195, 1205, 1217, 1253, 1263,
  1285, 1295, 1301,
];
const UPPER_TEXT: [number, string][] = [
  [470, "380"], [487, "900"], [527, "1500"], [561, "420"], [584, "1500"], [625, "900"], [650, "380"], [666, "900"],
  [706, "1500"], [740, "420"], [764, "1500"], [804, "900"], [829, "380"], [845, "900"], [885, "1500"], [920, "1320"],
  [982, "3360"], [1033, "520"], [1058, "1500"], [1095, "900"], [1122, "380"], [1137, "900"], [1176, "1500"],
  [1211, "420"], [1235, "1500"], [1275, "900"],
];
const LOWER_TEXT: [number, string][] = [
  [502, "420"], [549, "400"], [610, "400"], [640, "380"], [682, "400"], [730, "420"], [788, "400"], [820, "380"],
  [862, "400"], [940, "120"], [1025, "120"], [1081, "300"], [1111, "380"], [1152, "400"], [1199, "420"],
  [1260, "400"], [1291, "380"],
];
const BOTTOM_WINDOWS: [number, number][] = [
  [488, 534], [578, 623], [667, 712], [757, 802], [858, 903], [959, 1005], [1048, 1094], [1138, 1184], [1228, 1272],
];
const TOP_WINDOWS: [number, number][] = [
  [505, 544], [566, 604], [687, 725], [745, 783], [867, 903], [1039, 1077], [1157, 1196], [1216, 1253],
];
const RADIATORS: [number, number][] = [
  [497, 523], [591, 617], [675, 701], [767, 793], [854, 882], [967, 992], [1058, 1086], [1148, 1175], [1235, 1263],
];
const RAD_LABELS: [number, string][] = [
  [510, "26"], [603, "23"], [687, "23"], [780, "23"], [866, "25"], [977, "9"], [1070, "23"], [1161, "22"], [1247, "25"],
];
const ROOMS: [number, number, string][] = [
  [550, 589, "化验室"], [744, 594, "化验室"], [870, 594, "办公室"], [1068, 594, "办公室"], [1156, 594, "办公室"],
  [1253, 594, "办公室"], [959, 648, "女卫生间"],
];

const dimFont = "[font-family:'Roboto','Liberation_Sans',sans-serif]";
const cjkFont = "[font-family:'Noto_Sans_CJK_SC',sans-serif]";
const serifFont = "[font-family:'Liberation_Serif',serif]";

function Dim({ x, y, t, rotate = false }: { x: number; y: number; t: string; rotate?: boolean }) {
  return (
    <text
      x={x}
      y={y + 4}
      textAnchor="middle"
      fill="#fff"
      className={`text-[10px] font-medium ${dimFont}`}
      transform={rotate ? `rotate(-90 ${x} ${y})` : undefined}
    >
      {t}
    </text>
  );
}

function Bubble({ x, y, t }: { x: number; y: number; t: string }) {
  const pts = Array.from({ length: 9 }, (_, i) => {
    const a = (i * 40 - 90) * (Math.PI / 180);
    return `${(x + 0.5 + 10 * Math.cos(a)).toFixed(1)},${(y + 10 * Math.sin(a)).toFixed(1)}`;
  }).join(" ");
  return (
    <g>
      <polygon points={pts} fill="none" stroke={GREEN} strokeWidth="1.2" />
      {t === "10" ? (
        <text x={x} y={y + 6} textAnchor="middle" fill="#fff" className={`text-base font-bold ${serifFont}`}>
          {t}
        </text>
      ) : (
        <text x={x} y={y + 6} textAnchor="middle" fill="#fff" className="text-base font-bold [font-family:'DejaVu_Serif',serif]">
          {t}
        </text>
      )}
    </g>
  );
}

const Slash = ({ x, y }: { x: number; y: number }) => (
  <path d={`M${x - 4} ${y + 4}l8-8M${x - 3} ${y}l3-3 3 3-3 3z`} stroke={GREEN} fill={GREEN} strokeWidth="1" />
);

const Cross = ({ x, y }: { x: number; y: number }) => (
  <path d={`M${x - 4} ${y - 4}l8 8M${x + 4} ${y - 4}l-8 8`} stroke="#3fe0e8" strokeWidth="1.2" />
);

function WindowStrip({ x1, x2, y }: { x1: number; x2: number; y: number }) {
  return (
    <g shapeRendering="crispEdges">
      <rect x={x1 + 0.5} y={y + 0.5} width={x2 - x1} height={9} fill="#0d5560" stroke={CYAN} />
      <path d={`M${x1} ${y + 3.5}H${x2}M${x1} ${y + 6.5}H${x2}`} stroke={CYAN} />
    </g>
  );
}

function LabBench({ x }: { x: number }) {
  return (
    <g>
      <rect x={x} y={489} width={62} height={4} fill={MAGENTA} />
      {[0, 1, 2, 3].map((i) => (
        <g key={i}>
          <rect x={x + 1 + i * 15} y={494} width={15} height={9} fill="none" stroke={MAGENTA} strokeWidth="3" />
          <circle cx={x + 8.5 + i * 15} cy={498} r="1.5" fill={MAGENTA} />
        </g>
      ))}
    </g>
  );
}

function Dimensions() {
  const bottomTicks = [LEFT, ...AXES, RIGHT, ...BOTTOM_WINDOWS.flat()];
  return (
    <g>
      <g stroke={GREEN} fill="none" shapeRendering="crispEdges">
        <path d={`M${LEFT} 347.500H${RIGHT}M${LEFT} 367.500H${RIGHT}M${LEFT} 386.500H${RIGHT}`} />
        <path d={`M${LEFT} 748.500H${RIGHT}M${LEFT} 768.500H${RIGHT}M${LEFT} 788.500H${RIGHT}`} />
        <path d={`M${LEFT + 0.5} 341V407M${RIGHT + 0.5} 341V407M${LEFT + 0.5} 728V794M${RIGHT + 0.5} 728V794`} />
        {AXES.map((x, i) => (
          <path key={x} d={`M${x + 0.5} ${i === 3 ? 331 : 328}V407M${x + 0.5} 728V808`} />
        ))}
        <g strokeWidth="2">
          {UPPER_TICKS.map((x) => (
            <path key={x} d={`M${x} 381V407`} />
          ))}
          {bottomTicks.map((x, i) => (
            <path key={i} d={`M${x} 728V755`} />
          ))}
        </g>
        {UPPER_TICKS.map((x) => (
          <path key={x} d={`M${x} 413.500h1`} />
        ))}
        {bottomTicks.map((x, i) => (
          <path key={i} d={`M${x} 721.500h1`} />
        ))}
      </g>
      {UPPER_TICKS.map((x) => (
        <Slash key={x} x={x} y={387} />
      ))}
      {bottomTicks.map((x, i) => (
        <Slash key={i} x={x} y={748} />
      ))}
      {[LEFT, ...AXES, RIGHT].map((x) => (
        <g key={x}>
          <Slash x={x} y={367} />
          <Slash x={x} y={768} />
        </g>
      ))}
      {[LEFT, RIGHT].map((x) => (
        <g key={x}>
          <Slash x={x} y={347} />
          <Slash x={x} y={788} />
        </g>
      ))}
      {AXES.map((x, i) => (
        <g key={x}>
          <Bubble x={x} y={i === 3 ? 321 : 318} t={String(i + 1)} />
          <Bubble x={x} y={818} t={String(i + 1)} />
        </g>
      ))}
      {AXES.slice(0, -1).map((x, i) => {
        const mid = Math.round((x + AXES[i + 1]) / 2);
        const t = i === 4 ? "4500" : "3600";
        const side = i === 4 ? "1350" : "900";
        const [w1, w2] = BOTTOM_WINDOWS[i];
        return (
          <g key={x}>
            <Dim x={mid} y={360} t={t} />
            <Dim x={mid} y={761} t={t} />
            <Dim x={mid} y={741} t="1800" />
            <Dim x={Math.round((x + w1) / 2)} y={741} t={side} />
            <Dim x={Math.round((w2 + AXES[i + 1]) / 2)} y={741} t={side} />
          </g>
        );
      })}
      <Dim x={881} y={340} t="33800" />
      <Dim x={881} y={781} t="33800" />
      {[359, 378, 740, 760].map((y) => (
        <g key={y}>
          <Dim x={450} y={y} t="250" />
          <Dim x={1311} y={y} t="250" />
        </g>
      ))}
      {UPPER_TEXT.map(([x, t]) => (
        <Dim key={x} x={x} y={379} t={t} />
      ))}
      {LOWER_TEXT.map(([x, t]) => (
        <Dim key={x} x={x} y={393} t={t} />
      ))}

      <g stroke={GREEN} fill="none" shapeRendering="crispEdges">
        <path d="M342 487.500H442M353 481.500H434M342 681.500H442M353 687.500H434M358.500 476V692M378.500 476V692" />
        <path d="M1320 487.500H1420M1327 481.500H1408M1320 681.500H1420M1327 687.500H1408M1382.500 476V692M1402.500 476V692" />
      </g>
      {[358, 1402].map((x) => (
        <g key={x}>
          <Slash x={x} y={481} />
          <Slash x={x} y={687} />
        </g>
      ))}
      {[378, 1382].map((x) => (
        <g key={x}>
          <Slash x={x} y={481} />
          <Slash x={x} y={487} />
          <Slash x={x} y={681} />
          <Slash x={x} y={687} />
        </g>
      ))}
      {[331, 1430].map((x) => (
        <g key={x}>
          <Bubble x={x} y={487} t="B" />
          <Bubble x={x} y={681} t="A" />
        </g>
      ))}
      <Dim x={351} y={584} t="8300" rotate />
      <Dim x={371} y={584} t="7800" rotate />
      <Dim x={371} y={472} t="250" rotate />
      <Dim x={371} y={697} t="250" rotate />
      <Dim x={1374} y={472} t="250" rotate />
      <Dim x={1374} y={697} t="250" rotate />
      <Dim x={1375} y={584} t="7800" rotate />
      <Dim x={1395} y={584} t="8300" rotate />
    </g>
  );
}

function FloorPlan() {
  const steps = Array.from({ length: 13 }, (_, i) => 499.5 + i * 7);
  return (
    <g>
      <g stroke={MAGENTA} fill="none" shapeRendering="crispEdges">
        <path d="M459.500 481V443.500H1301.500V481M462.500 481V446.500H1299.500V481" />
      </g>
      <g stroke={WALL} fill="none" shapeRendering="crispEdges">
        <path d="M459.500 687.500V481.500H475.500V490.500H469.500V678.500H642.500V490.500H635.500V481.500H654.500V490.500H648.500V678.500H821.500V490.500H815.500V481.500H834.500V490.500H827.500V678.500H933.500V490.500H856.500V481.500H939.500V687" />
        <path d="M459 687.500H1301.500V481.500H1285.500V490.500H1292.500V678.500H1208.500V490.500H1263.500V481.500H1147.500V490.500H1202.500V678.500H1119.500V490.500H1125.500V481.500H1106.500V490.500H1113.500V678.500H1029.500V490.500H1084.500V481.500H1023.500V678.500H939.500" />
        <path d="M497.500 481.500H613.500V490.500H497.500zM677.500 481.500H792.500V490.500H677.500z" />
        <path d="M939.500 627.500H942.500V630.500H939.500M1023.500 627.500H962.500V630.500H1023.500M936.500 678V687" />
      </g>
      {AXES.map((x) => (
        <path key={x} d={`M${x - 5} 688l1 3 3 2.500h5l3-2.500 1-3`} stroke="#fff" fill="none" strokeWidth="1.2" />
      ))}
      {TOP_WINDOWS.map(([a, b]) => (
        <WindowStrip key={a} x1={a} x2={b} y={481} />
      ))}
      {BOTTOM_WINDOWS.map(([a, b]) => (
        <WindowStrip key={a} x1={a} x2={b} y={678} />
      ))}

      <g stroke={YELLOW} fill="none" shapeRendering="crispEdges">
        <path d="M939.500 627V488.500H985.500M939 490.500H978M1023.500 627V492" />
        <path d="M978.500 490.500V587.500H984.500V490.500M980.500 490V585.500H983.500V490M985.500 492.500H1023" />
        {steps.map((y) => (
          <path key={y} d={`M939 ${y}H978M985 ${y}H1023`} />
        ))}
      </g>
      <g stroke={GREEN} fill="none" shapeRendering="crispEdges">
        <path d="M1003.500 480V596.500H960.500V534M958 461.500H1004" />
      </g>
      <path d="M960 540l.5-8 1 8zM960 462l6.500 7 6.500-7" stroke={GREEN} fill="none" />
      <rect x={1008.5} y={612.5} width={15} height={15} fill="none" stroke="#fff" shapeRendering="crispEdges" />
      <path d="M1011 627l2-9 10-5" stroke="#fff" fill="none" />

      <g stroke={MAGENTA} fill="none" strokeWidth="2">
        <path d="M993 634H1023M993 656H1023M994 633v5M994 654v5M994 674v5" />
        <path d="M1014 639.500h-5l-7 5.500 7 5.500h5z" strokeWidth="1.500" />
        <circle cx="1010" cy="645" r="4" strokeWidth="3" />
        <path d="M1004 663h11v9h-9z" strokeWidth="1.500" />
        <circle cx="1010" cy="667" r="4" strokeWidth="3" />
        <rect x="943" y="663" width="22" height="15" strokeWidth="1" />
        <rect x="948.500" y="665.500" width="12" height="11" rx="4" />
        <circle cx="954" cy="669" r="1.500" />
        <path d="M950 673h9M954 670v7" />
      </g>
      <LabBench x={523} />
      <LabBench x={706} />

      <g stroke={RED} fill="none" shapeRendering="crispEdges">
        <path d="M475 674V495H1287V668H544" strokeWidth="2" />
        <path d="M523 673.500H550M617 673.500H675M793 673.500H854M993 673.500H1058M1175 673.500H1235" />
        <rect x="525.500" y="662.500" width="13" height="9" />
        <path d="M526 661.500h5M539 668.500h6M542 666v4" strokeWidth="2" />
        {[549, 639, 818, 1033, 1199].map((x) => (
          <rect key={x} x={x - 1.5} y={671.5} width="4" height="4" />
        ))}
      </g>
      <path d="M473 677l1-5M475 673c3 0 3 3 0 3.500" stroke="#fff" fill="none" />
      {RADIATORS.map(([a, b]) => (
        <rect key={a} x={a + 0.5} y={670.5} width={b - a} height={7} fill="none" stroke="#1a3fe0" shapeRendering="crispEdges" />
      ))}
      <Cross x={475} y={585} />
      <Cross x={882} y={495} />
      <Cross x={914} y={668} />
      <Cross x={1287} y={585} />

      {RAD_LABELS.map(([x, t]) => (
        <text key={x} x={x} y={699} textAnchor="middle" fill={GREEN} className={`text-[10px] ${dimFont}`}>
          {t}
        </text>
      ))}
      {ROOMS.map(([x, y, t]) => (
        <text key={x} x={x} y={y + 4} textAnchor="middle" fill="#fff" className={`text-[10px] font-bold ${cjkFont}`}>
          {t}
        </text>
      ))}
      <Dim x={993} y={455} t="7.500" />
      <text x={1004} y={477} textAnchor="middle" fill="#fff" className={`text-[9px] ${cjkFont}`}>
        下
      </text>
    </g>
  );
}

const TITLE_TEXT: [number, number, string][] = [
  [1389, 1098, "工程总称"], [1379, 1116, "项"], [1401, 1116, "目"], [1485, 1116, "办公楼"],
];
const TITLE_BOLD: [number, number, string][] = [
  [1164, 1137, "总工程师"], [1162, 1159, "室主任"], [1168, 1179, "项目负责人"],
  [1260, 1137, "审"], [1277, 1137, "核"], [1260, 1159, "校"], [1277, 1159, "对"], [1260, 1179, "设"], [1277, 1179, "计"],
  [1500, 1135, "设"], [1509, 1135, "计"], [1519, 1135, "号"], [1500, 1151, "图"], [1518, 1151, "别"],
  [1500, 1166, "图"], [1518, 1166, "号"], [1500, 1181, "日"], [1518, 1181, "期"],
];

function TitleBlock() {
  return (
    <g>
      <g stroke="#fff" fill="none" shapeRendering="crispEdges">
        <path d="M1144.500 1186V1084.500H1583" strokeWidth="3" />
        <path d="M1146 1121.500H1579M1363 1103.500H1579M1146 1142.500H1341M1146 1163.500H1341M1493 1137.500H1579M1493 1153.500H1579M1493 1168.500H1579" />
        <path d="M1362.500 1086V1121M1424.500 1086V1121M1203.500 1121V1183M1253.500 1121V1183M1290.500 1121V1183M1340.500 1121V1183M1493.500 1121V1183M1527.500 1121V1183" />
        <path d="M1146 1184.500H1581M1580.500 1084V1184" />
      </g>
      {TITLE_TEXT.map(([x, y, t]) => (
        <text key={x} x={x} y={y} textAnchor="middle" fill="#d8d8d8" className={`text-[8px] font-medium ${cjkFont}`}>
          {t}
        </text>
      ))}
      {TITLE_BOLD.map(([x, y, t]) => (
        <text key={`${x}-${y}`} x={x} y={y} textAnchor="middle" fill="#fff" className={`text-[7px] font-bold ${cjkFont}`}>
          {t}
        </text>
      ))}
      <text x={1410} y={1162} textAnchor="middle" fill="#fff" className={`text-[13px] ${cjkFont}`}>
        三层采暖平面图
      </text>
      <text x={1553} y={1135} textAnchor="middle" fill="#fff" className={`text-[11px] ${dimFont}`}>2008-01</text>
      <text x={1550} y={1150} textAnchor="middle" fill="#ccc" className={`text-[9px] ${cjkFont}`}>暖施</text>
      <text x={1549} y={1165} textAnchor="middle" fill="#fff" className={`text-[11px] ${dimFont}`}>04</text>
      <text x={1556} y={1180} textAnchor="middle" fill="#fff" className={`text-[11px] ${dimFont}`}>2008,07</text>
    </g>
  );
}

function Canvas() {
  return (
    <main className="relative min-h-0 min-w-0 flex-1 bg-[#212830]">
      <svg viewBox="33 133 1662 1103" preserveAspectRatio="xMinYMin meet" className="block size-full" role="img" aria-label="三层采暖平面图">
        <g fill="none" stroke={CYAN} shapeRendering="crispEdges">
          <rect x="125.500" y="163.500" width="1480" height="1046" stroke="#10e4e4" />
          <rect x="188" y="188" width="1393" height="996" strokeWidth="4" />
        </g>
        <Dimensions />
        <FloorPlan />
        <text x={908} y={887} fill="#fff" className={`text-[13px] font-medium ${cjkFont}`}>
          三层采暖平面图
        </text>
        <text x={1006} y={888} fill="#fff" className={`text-base ${serifFont}`}>
          1:100
        </text>
        <path d="M905 894H1029" stroke={GREEN} strokeWidth="4" />
        <path d="M905 899.500H1029" stroke={GREEN} />
        <TitleBlock />
        <g stroke="#fff" fill="none" shapeRendering="crispEdges">
          <path d="M59.500 1160V1204M65 1209.500H109" />
          <rect x="55.500" y="1204.500" width="9" height="9" />
          <path d="M33 1229.500H1635M1648 1229.500H1695M1641.500 133V1223" />
          <rect x="1635.500" y="1223.500" width="12" height="12" />
        </g>
        <path d="M61 1142l6.500 7 6.500-7M67.500 1149v6M114 1195l13 13M127 1195l-13 13" stroke="#fff" fill="none" />
        <g className={cjkFont}>
          <circle cx="1612.500" cy="215" r="55" fill="none" stroke="#8a8a8a" strokeOpacity="0.4" strokeWidth="10" />
          <g fill="#a3a6a9" textAnchor="middle" className="text-[18px] font-medium">
            <text x="1612.500" y="166">北</text>
            <text x="1612.500" y="279">南</text>
            <text x="1555.500" y="222">西</text>
            <text x="1668.500" y="222">东</text>
          </g>
          <rect x="1586.500" y="189.500" width="52" height="51" fill="#b9babb" fillOpacity="0.9" stroke="#aaa" />
          <rect x="1596.500" y="199" width="33" height="32" fill="#a7acb3" />
          <path d="M1605.500 190V240" stroke="#66b5b8" />
          <text x="1612.500" y="225" fill="#55595e" textAnchor="middle" className="text-[28px]">上</text>
          <rect x="1589" y="303" width="47" height="16" rx="3" fill="#a9adb5" stroke="#8b9097" />
          <text x="1605" y="315" fill="#5e636b" textAnchor="middle" className="text-[11px]">WCS</text>
          <path d="M1623 308.500h8l-4 4z" fill="none" stroke="#8b9097" />
        </g>
      </svg>
      <button type="button" className="absolute top-1 left-1 text-[13px] text-black">
        [−][俯视][二维线框]
      </button>
    </main>
  );
}

/* ------------------------------------------------------------------ */
/* Bottom                                                              */
/* ------------------------------------------------------------------ */
const MONO_RE = /([\x20-\x7e]+)/;

function CommandLine() {
  return (
    <div className="flex h-[58px] border-t-3 border-[#3b4453] pl-[3px]">
      <div className="flex w-[25px] shrink-0 flex-col items-center justify-between bg-[#2a313d] py-1 text-[#e6e9ed]">
        <svg viewBox="0 0 16 5" className="h-[5px] w-4" aria-hidden="true">
          <path d="M0 1h16M0 4h16" stroke="#c3c8cf" strokeDasharray="2 1" strokeWidth="1.500" />
        </svg>
        <button type="button" aria-label="关闭命令行">
          <svg viewBox="0 0 8 8" className="mb-1 size-2" stroke="#e6e9ed" strokeWidth="1.500" aria-hidden="true">
            <path d="M0 0l8 8M8 0L0 8" />
          </svg>
        </button>
        <button type="button" aria-label="自定义">
          <Icon name="wrench" className="size-3.5" />
        </button>
      </div>
      <div className="flex min-w-0 flex-1 flex-col text-lg leading-none">
        <output className="flex h-[29px] items-center bg-[#c8c8c8] pl-0.5 whitespace-pre text-black">
          {"选择注释对象或 [放弃(U)/模式(M)]: *取消*".split(MONO_RE).map((s, i) =>
            i % 2 ? (
              <span key={i} className="text-base [font-family:'DejaVu_Sans_Mono',monospace]">
                {s}
              </span>
            ) : (
              <span key={i}>{s}</span>
            ),
          )}
        </output>
        <div className="mt-px flex h-6 items-center bg-white pl-1">
          <button type="button" aria-label="最近使用的命令" className="flex items-center gap-1">
            <Icon name="cmd" />
            <Caret className="text-[#555]" />
          </button>
          <input
            aria-label="命令"
            placeholder="键入命令"
            className="ml-1.5 h-full flex-1 bg-transparent italic outline-none placeholder:text-[#8a8a8a]"
          />
        </div>
      </div>
    </div>
  );
}

function StatusButton({ icon, label, active = false, w = "w-6" }: { icon: string; label: string; active?: boolean; w?: string }) {
  return (
    <button
      type="button"
      aria-label={label}
      className={`flex h-full items-center justify-center ${w} ${active ? "bg-[#5a87b8]" : ""}`}
    >
      <Icon name={icon} />
    </button>
  );
}

const StatusGroup = ({ children }: { children: React.ReactNode }) => (
  <div className="flex h-6 items-center bg-[#3b4453]">{children}</div>
);

function StatusBar() {
  return (
    <footer className="flex h-8 items-start justify-between text-xs">
      <div className="isolate flex pl-4 text-[#b4bac4]">
        <button type="button" className="relative h-[18px] w-11 font-bold text-white">
          <TabShape fill="#3b4453" flip />
          模型
        </button>
        <button type="button" className="relative ml-1 h-[18px] w-[50px]">
          <TabShape fill="#2d3542" flip />
          布局1
        </button>
        <button type="button" aria-label="新建布局" className="relative ml-1.5 flex h-[18px] w-5 items-center justify-center">
          <TabShape fill="#2d3542" flip />
          <svg viewBox="0 0 8 8" className="size-2" stroke="#b4bac4" strokeWidth="2" aria-hidden="true">
            <path d="M4 0v8M0 4h8" />
          </svg>
        </button>
      </div>
      <div className="mt-0.5 flex gap-0.5 pr-0.5 text-[#e6e9ed]">
        <StatusGroup>
          <button type="button" className="h-full w-[30px]">模型</button>
        </StatusGroup>
        <StatusGroup>
          <StatusButton icon="stGrid" label="栅格" />
          <StatusButton icon="stSnap" label="捕捉" />
          <CaretButton label="捕捉设置" w="w-4" />
        </StatusGroup>
        <StatusGroup>
          <StatusButton icon="stOrtho" label="正交" />
          <StatusButton icon="stPolar" label="极轴追踪" />
          <CaretButton label="极轴设置" w="w-4" />
          <StatusButton icon="stIso" label="等轴测草图" />
          <CaretButton label="等轴测设置" w="w-4" />
        </StatusGroup>
        <StatusGroup>
          <StatusButton icon="stTrack" label="对象捕捉追踪" />
          <StatusButton icon="stOsnap" label="对象捕捉" active />
          <CaretButton label="对象捕捉设置" w="w-4" />
        </StatusGroup>
        <StatusGroup>
          <StatusButton icon="stLw" label="线宽" />
        </StatusGroup>
        <StatusGroup>
          <StatusButton icon="stAnno1" label="注释可见性" active />
          <StatusButton icon="stAnno2" label="自动缩放" />
          <StatusButton icon="stAnno3" label="注释比例" />
          <button type="button" className="flex h-full w-[34px] items-center justify-center gap-1">
            1:1
            <Caret />
          </button>
        </StatusGroup>
        <StatusGroup>
          <StatusButton icon="gear" label="切换工作空间" />
          <CaretButton label="工作空间列表" w="w-4" />
        </StatusGroup>
        <StatusGroup>
          <StatusButton icon="plus" label="注释监视器" />
        </StatusGroup>
        <StatusGroup>
          <StatusButton icon="shapes" label="隔离对象" />
        </StatusGroup>
        <StatusGroup>
          <StatusButton icon="perf" label="图形性能" />
        </StatusGroup>
        <StatusGroup>
          <StatusButton icon="clean2" label="全屏显示" />
          <StatusButton icon="menu" label="自定义" />
        </StatusGroup>
      </div>
    </footer>
  );
}

export default function App() {
  return (
    <div className="flex h-screen flex-col overflow-hidden border border-r-2 border-[#1784b4] bg-[#222933] pr-0.5 [font-family:'Open_Sans','Noto_Sans_CJK_SC',sans-serif]">
      <TitleBar />
      <MenuBar />
      <FileTabs />
      <Toolbars />
      <div className="flex min-h-0 flex-1">
        <div className="ml-[3px] flex w-[29px] shrink-0 bg-[#3b4453]">
          <SideBar names={DRAW} label="绘图" />
        </div>
        <Canvas />
        <div className="flex w-8 shrink-0 bg-[#3b4453] pl-[3px]">
          <SideBar names={MODIFY} label="修改" />
        </div>
      </div>
      <CommandLine />
      <StatusBar />
    </div>
  );
}
